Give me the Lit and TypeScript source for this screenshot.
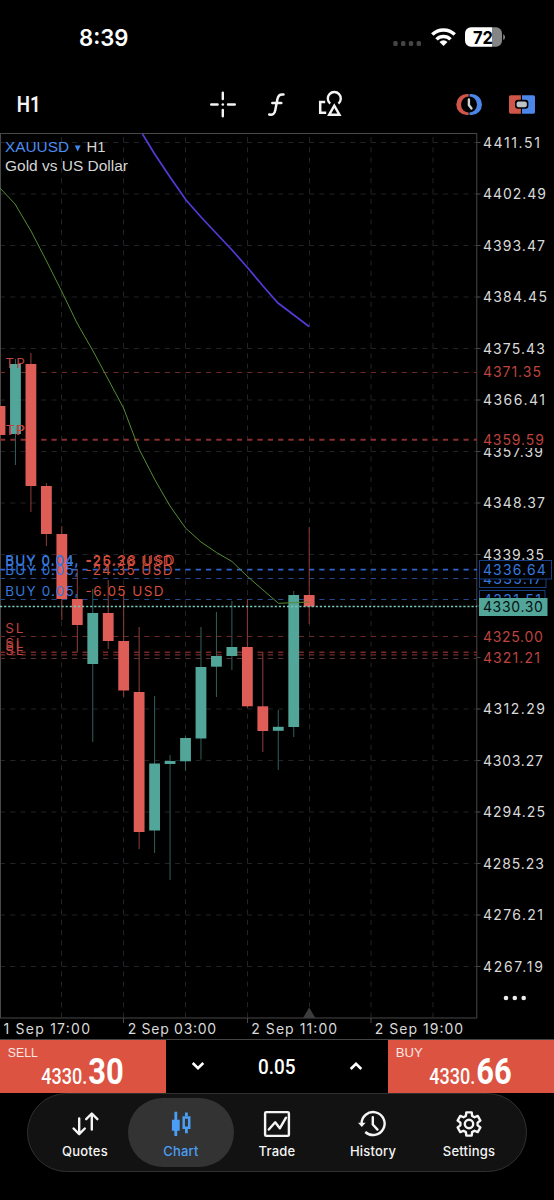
import { LitElement, html, svg, css } from "lit";
import { customElement } from "lit/decorators.js";

const GRID_X = [61.5, 123.5, 185.5, 247.5, 309.5, 371, 433];
const PRICES = ["4411.51", "4402.49", "4393.47", "4384.45", "4375.43", "4366.41", "4357.39", "4348.37", "4339.35", "4330.33", "4321.31", "4312.29", "4303.27", "4294.25", "4285.23", "4276.21", "4267.19"];
const PRICE_W = [57, 63, 62, 64, 62, 62, 60, 62, 61, 0, 0, 62, 60, 62, 61, 60, 60];
const priceY = (i: number) => 142.5 + i * 51.5;

// up?, high, body top, body bottom, low
const CANDLES: [number, number, number, number, number][] = [
  [0, 406, 406, 435, 435], [1, 359, 364, 434, 465], [0, 353, 364, 486, 512], [0, 483, 486, 534, 546],
  [0, 526, 534, 599, 620], [0, 569, 599, 625, 652], [1, 589, 613, 664, 742], [0, 580, 613, 641, 649],
  [0, 593, 641, 690.5, 697], [0, 627, 692, 832, 849], [1, 696, 763.5, 830.5, 853], [1, 755, 761, 764, 880],
  [1, 736, 738, 761.3, 771], [1, 627, 667, 738.5, 759.5], [1, 612, 656, 666.7, 697], [1, 601, 647, 656, 670],
  [0, 599, 647, 706.3, 708], [0, 652, 706.3, 731, 752], [1, 710, 726.8, 730.8, 770], [1, 591, 595, 727, 737],
  [0, 527, 595, 606.5, 624],
];

const gearPath = (() => {
  const pts: string[] = [];
  for (let i = 0; i < 6; i++) {
    const a = i * 60;
    for (const [d, r] of [[-21, 8.7], [-13, 11.9], [13, 11.9], [21, 8.7]]) {
      const t = ((a + d - 90) * Math.PI) / 180;
      pts.push(`${(14 + r * Math.cos(t)).toFixed(2)} ${(14 + r * Math.sin(t)).toFixed(2)}`);
    }
  }
  return `M${pts.join("L")}Z`;
})();

const ICONS: Record<string, unknown> = {
  Quotes: svg`<g class="ln"><path d="M8.2 8.5v15.5M2.6 18.5l5.6 5.7 5.6-5.7"/><path d="M20.8 19.5V4M15.2 9.2l5.6-5.7 5.6 5.7"/></g>`,
  Chart: svg`<path fill="currentColor" d="M7.400 1.800h2.800v8h2.500v11h-2.500v5.200h-2.800v-5.200H4.900v-11h2.500zM18 2.600h2.800v3.600H18zM18 18.500h2.800v4.800H18z"/><path d="M16.700 7.600h5.500v10.200h-5.500z" fill="none" stroke="currentColor" stroke-width="2.500"/>`,
  Trade: svg`<g class="ln"><rect x="2.100" y="2.100" width="23.800" height="23.800" rx="1.200"/><path d="M5.800 19.500l6.400-7.200 4.600 6 6.200-10.600"/></g>`,
  History: svg`<g class="ln"><path d="M2.600 14A11.500 11.500 0 1 1 6.300 22" stroke-linecap="butt"/><path d="M13.800 7.300v7.200l4.700 5.100"/></g><path fill="currentColor" d="M-1 12.800h7.600l-3.800 4.200z"/>`,
  Settings: svg`<g class="ln"><path d="${gearPath}"/><circle cx="14" cy="14" r="4.200"/></g>`,
};

@customElement("status-bar")
class StatusBar extends LitElement {
  static styles = css`
    :host { display: flex; height: 74px; align-items: center; justify-content: space-between; padding: 0 48px 0 79px; box-sizing: border-box; }
    svg { display: block; }
    text { font-family: Inter, sans-serif; fill: #fff; }
    .level { fill: #000; }
  `;
  render() {
    return html`
      <svg width="52" height="30"><text x="0" y="23.600" font-size="22.500" font-weight="600" textLength="49.500" lengthAdjust="spacingAndGlyphs">8:39</text></svg>
      <svg width="114" height="30" viewBox="392 22 114 30">
        <g fill="#454545">${[395.5, 403.2, 411, 418.8].map((x) => svg`<rect x=${x - 2.2} y="41" width="4.400" height="5" rx="1.600"/>`)}</g>
        <g fill="none" stroke="#fff" stroke-width="3.500">
          <path d="M432.300 34.600a15.800 15.800 0 0 1 22.400 0"/><path d="M436.500 39.400a9.800 9.800 0 0 1 14 0"/>
        </g>
        <path fill="#fff" d="M443.500 46l-4-4.100a5.800 5.800 0 0 1 8 0z"/>
        <clipPath id="b"><rect x="465" y="27.300" width="37" height="19.400" rx="6"/></clipPath>
        <g clip-path="url(#b)"><path fill="#fff" d="M465 27h27v20h-27z"/><path fill="#858585" d="M492 27h11v20h-11z"/></g>
        <path fill="#858585" d="M503.200 34.200c2.400.8 2.400 5 0 5.800z"/>
        <text class="level" x="473" y="43.600" font-size="18" font-weight="700" textLength="20" lengthAdjust="spacingAndGlyphs">72</text>
      </svg>`;
  }
}

@customElement("chart-toolbar")
class ChartToolbar extends LitElement {
  static styles = css`
    :host { display: grid; grid-template-columns: 190px 180px 1fr; height: 59px; align-items: center; box-sizing: border-box; }
    svg { display: block; height: 50px; }
    .right { justify-self: end; }
    text { font-family: Roboto, sans-serif; font-weight: 600; fill: #f4f4f4; }
  `;
  render() {
    return html`
      <svg width="60" viewBox="0 79 60 50"><text x="16.800" y="111.600" font-size="21.500" textLength="24" lengthAdjust="spacingAndGlyphs">H1</text></svg>
      <svg width="180" viewBox="190 79 180 50" fill="none" stroke="#f4f4f4" stroke-width="2.400" stroke-linecap="round">
        <path d="M211.200 104.500h6.400M228 104.500h6.800M222.800 92.800v6.200M222.800 110v6.200"/><circle cx="222.800" cy="104.500" r="1.300" fill="#f4f4f4" stroke="none"/>
        <path d="M283.500 94.600c-3.500-.7-5.200.8-6 4.200l-2.300 11.800c-.6 3.300-2.400 4.600-6 3.900M272.300 102.900h9" stroke-width="2.500"/>
        <path d="M330.200 103.600a6.500 6.500 0 1 1 8.200 0" stroke-linecap="butt"/>
        <path d="M334.300 105.600l-5.200 9.200h10.400z" stroke-linejoin="miter"/>
        <path d="M325.200 101.900h-5v10.800h6" stroke-linecap="butt" stroke-width="2.500"/>
      </svg>
      <svg class="right" width="114" viewBox="440 79 114 50">
        <path fill="#cf5649" d="M466.800 94h1.800v21h-1.800a10.500 10.500 0 0 1 0-21z"/><path fill="#4c86e8" d="M469.500 94h2a10.500 10.500 0 0 1 0 21h-2z"/>
        <circle cx="469" cy="104.500" r="8" fill="#000"/>
        <path d="M468.900 99.500v5.600l2.600 3.300" fill="none" stroke="#ccd4d4" stroke-width="2.400" stroke-linecap="round"/>
        <path fill="#cf5649" d="M510.600 95.200h10.300v18.500h-10.300a1.600 1.600 0 0 1-1.600-1.600V96.800a1.600 1.600 0 0 1 1.600-1.600z"/>
        <path fill="#4c86e8" d="M522 95.200h11.400a1.600 1.600 0 0 1 1.600 1.600v15.300a1.600 1.600 0 0 1-1.600 1.600H522z"/>
        <rect x="515" y="99.800" width="13.400" height="9" rx="3" fill="#000"/><rect x="516.600" y="101.500" width="10.200" height="5.700" rx="2" fill="#bcc3c9"/>
      </svg>`;
  }
}

@customElement("price-chart")
class PriceChart extends LitElement {
  static styles = css`
    :host { display: block; height: 907px; }
    svg { display: block; }
    text { font-family: Inter, sans-serif; font-size: 14px; stroke: none; }
    .grid { stroke: #222329; stroke-dasharray: 5 5.3; fill: none; }
    .frame { stroke: #484848; fill: none; }
    .axis text { fill: #d9d9d9; }
    .red { fill: #bd433e; }
    .hline { stroke-dasharray: 5.2 5.1; }
    .lbl { font-size: 13.5px; }
    .blue { fill: #3677dc; }
    .loss { fill: #d44f3e; }
    .head { font-family: "Liberation Sans", sans-serif; font-size: 15.5px; fill: #d6d6d6; }
    .symbol { fill: #4b8df0; }
    .last { fill: #07110f; }
  `;
  private price(x: number, y: number, t: string, w: number, cls = "") {
    return svg`<text class=${cls} x=${x} y=${y} textLength=${w}>${t}</text>`;
  }
  private order(y: number, vol: string, pl: string, w: number) {
    return svg`<text class="lbl blue" x="5.300" y=${y} textLength="73">${"BUY " + vol + ","}</text><text class="lbl loss" x="85.500" y=${y} textLength=${w}>${pl + " USD"}</text>`;
  }
  private level(y: number, color: string, w = 1) {
    return svg`<path class="hline" d="M0 ${y}H477" stroke=${color} stroke-width=${w}/>`;
  }
  render() {
    return html`<svg width="554" height="907" viewBox="0 133 554 907">
      <g class="grid">
        ${GRID_X.map((x) => svg`<path d="M${x} 137V1018"/>`)}
        ${PRICES.map((_, i) => (i === 9 || i === 10 ? "" : svg`<path d="M0 ${priceY(i)}H480"/>`))}
      </g>
      <path class="frame" d="M0 133.500H476.800V1018H0M.5 133V1018"/>
      <g class="frame">${PRICES.map((_, i) => svg`<path d="M477 ${priceY(i)}h3.500"/>`)}${[123.5, 247.5, 371].map((x) => svg`<path d="M${x} 1018v5"/>`)}</g>
      <path d="M303 1018l6.200-10.500 6.200 10.500z" fill="#3c3c3c"/>
      ${this.level(372.5, "#6b2a2a")}${this.level(439.7, "#8a2d2e", 2)}
      ${this.level(569.6, "#2f64cf", 1.8)}${this.level(578.5, "#24488c")}${this.level(599.5, "#24488c")}
      ${this.level(636.5, "#6b2828")}${this.level(652.3, "#742828", 1.4)}${this.level(654.9, "#742828", 1.4)}${this.level(658.5, "#5c3030")}
      <path d="M142.500 134L154 153 170 177 186 200 201 217 216 233 232 250 247 267 263 286 278 303 309 326.500" stroke="#5639d8" stroke-width="1.700" fill="none"/>
      ${CANDLES.map(([up, h, t, b, l], i) => {
        const x = i * 15.46;
        return svg`<path d="M${x} ${h}V${l}" stroke=${up ? "#31605b" : "#8f3f3b"}/><rect x=${x - 5.4} y=${t} width="10.800" height=${b - t} fill=${up ? "#52a599" : "#de5d57"}/>`;
      })}
      <path d="M0 188L15 204 31 231 46 260 62 292 77 323 93 351 108 379 123.500 408 139 449 155 480 170 506 185.500 528 201 542 216.500 552.500 232 561.500 247 576 263 590 278.500 603.300 294 602.700 309 602" stroke="#558d33" fill="none"/>
      <path d="M0 606.500H477" stroke="#7ac8bb" stroke-width="1.400" stroke-dasharray="2.200 1.900"/>
      ${this.price(5.3, 368, "TP", 19.5, "lbl red")}${this.price(5.3, 434.7, "TP", 19, "lbl red")}${this.price(6, 435.1, "TP", 19, "lbl red")}
      ${this.price(5.3, 633, "SL", 18, "lbl red")}${this.price(5.3, 648.2, "SL", 18, "lbl red")}${this.price(5.3, 651, "SL", 18, "lbl red")}${this.price(5.3, 655, "SL", 18, "lbl red")}
      ${this.order(565, "0.04", "-26.28", 89)}${this.order(566, "0.04", "-25.36", 87)}${this.order(574.5, "0.05", "-24.35", 87)}${this.order(595.5, "0.05", "-6.05", 78)}

      <g class="axis">
        ${PRICES.map((p, i) => (i === 9 || i === 10 ? "" : this.price(482.9, priceY(i) + 5.2, p, PRICE_W[i])))}
        <path d="M482 430h68v18h-68z" fill="#000"/>
      </g>
      ${this.price(482.9, 377.3, "4371.35", 58, "red")}${this.price(482.9, 444.5, "4359.59", 61, "red")}
      ${this.price(482.9, 641.7, "4325.00", 60, "red")}${this.price(482.9, 663, "4321.21", 57, "red")}
      <g fill="#000" stroke="#163f86">
        <rect x="479.500" y="569.500" width="66.500" height="18"/>${this.price(482.9, 583.7, "4335.17", 59, "blue")}
        <rect x="479.500" y="590.500" width="65.500" height="18"/>${this.price(482.9, 604.5, "4331.51", 58, "blue")}
        <rect x="479.500" y="560.500" width="72" height="18.500"/>
      </g>
      ${this.price(482.9, 575.2, "4336.64", 63, "blue")}
      <path d="M479 598h68.500v18H479z" fill="#52a599"/>
      ${this.price(482.9, 612, "4330.30", 60, "last")}

      <text class="head symbol" x="5" y="152" textLength="64" lengthAdjust="spacingAndGlyphs">XAUUSD</text>
      <path d="M74.800 145.500h5.800l-2.900 6z" fill="#3f86ee"/>
      <text class="head" x="86.500" y="152" textLength="19" lengthAdjust="spacingAndGlyphs">H1</text>
      <text class="head" x="5" y="171" textLength="123" lengthAdjust="spacingAndGlyphs">Gold vs US Dollar</text>
      <g class="axis">
        ${["1 Sep 17:00", "2 Sep 03:00", "2 Sep 11:00", "2 Sep 19:00"].map((t, i) => this.price([3.5, 127.7, 251.2, 374.7][i], 1034, t, [86.5, 88.5, 86, 88.5][i]))}
      </g>
      <g fill="#ececec"><circle cx="506" cy="998" r="2.300"/><circle cx="514.800" cy="998" r="2.300"/><circle cx="523.700" cy="998" r="2.300"/></g>
      <path d="M0 1039.500H554" stroke="#444"/>
    </svg>`;
  }
}

@customElement("trade-panel")
class TradePanel extends LitElement {
  static styles = css`
    :host { display: grid; grid-template-columns: 166.3px 221.5px 1fr; height: 52.5px; }
    .side { background: #dc5341; }
    svg { display: block; }
    text { font-family: Roboto, sans-serif; fill: #fff; }
    .name { font-family: "Liberation Sans", sans-serif; font-size: 13.5px; fill: #fce7e3; }
    .mid { display: flex; justify-content: space-between; align-items: center; padding: 0 24.5px; color: #fff; }
  `;
  private quote(side: string, w: number, whole: string, cents: string) {
    return html`<div class="side"><svg width="166" height="52">
      <text class="name" x="7.800" y="16.500" textLength=${w} lengthAdjust="spacingAndGlyphs">${side}</text>
      <text x="41.300" y="43.800" font-size="21.500" font-weight="500" textLength="46" lengthAdjust="spacingAndGlyphs">${whole}</text>
      <text x="88.300" y="44.300" font-size="37" font-weight="700" textLength="35.500" lengthAdjust="spacingAndGlyphs">${cents}</text></svg></div>`;
  }
  render() {
    return html`${this.quote("SELL", 30, "4330.", "30")}
      <div class="mid">
        <svg width="14" height="10" fill="none" stroke="currentColor" stroke-width="2.600"><path d="M1.700 2l5.300 5.200L12.300 2"/></svg>
        <svg width="40" height="24"><text x="1" y="20" font-size="20" font-weight="500" textLength="37.500" lengthAdjust="spacingAndGlyphs">0.05</text></svg>
        <svg width="14" height="10" fill="none" stroke="currentColor" stroke-width="2.600"><path d="M1.700 8L7 2.800 12.300 8"/></svg>
      </div>
      ${this.quote("BUY", 27, "4330.", "66")}`;
  }
}

@customElement("tab-bar")
class TabBar extends LitElement {
  static styles = css`
    :host { display: flex; margin: .5px 27px 0; height: 79px; box-sizing: border-box; border: 1px solid #303030; border-radius: 40px; background: #121212; padding: 4px 9px; }
    .tab { flex: 1; display: flex; justify-content: center; color: #f5f5f5; font: 500 13px/16px Inter, sans-serif; letter-spacing: .2px; }
    .pill { flex: none; width: 106px; display: flex; flex-direction: column; align-items: center; border-radius: 35px; padding-top: 12px; gap: 5px; box-sizing: border-box; }
    .on { background: #333; color: #4a9ff5; }
    svg { display: block; overflow: visible; }
    .ln { fill: none; stroke: currentColor; stroke-width: 2.4; stroke-linejoin: round; stroke-linecap: round; }
    .tab { min-width: 0; }
  `;
  render() {
    return html`${Object.keys(ICONS).map((n) => html`<div class="tab"><div class="pill ${n === "Chart" ? "on" : ""}">
      <svg width="28" height="28">${ICONS[n]}</svg><span>${n}</span></div></div>`)}`;
  }
}

@customElement("app-root")
class AppRoot extends LitElement {
  static styles = css`
    :host { display: flex; flex-direction: column; width: 554px; height: 1200px; background: #000; overflow: hidden; }
  `;
  render() {
    return html`<status-bar></status-bar><chart-toolbar></chart-toolbar><price-chart></price-chart><trade-panel></trade-panel><tab-bar></tab-bar>`;
  }
}
